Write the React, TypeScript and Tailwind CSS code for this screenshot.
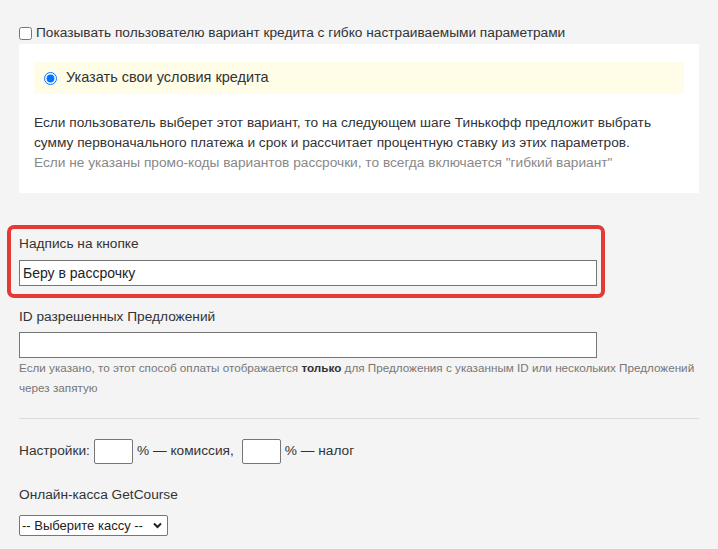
import React from 'react';

const App = () => {
  return (
    <div className="min-h-[549px] bg-[#f4f4f4] text-[#333] font-['Liberation_Sans',Arial,sans-serif] text-[13.7px]">
      <div className="pt-[24px] px-[19px]">
        {/* Flexible credit option */}
        <label className="flex items-center h-[18px] gap-[4px]">
          <input type="checkbox" className="w-[13px] h-[13px] m-0" />
          <span className="leading-[18px]">Показывать пользователю вариант кредита с гибко настраиваемыми параметрами</span>
        </label>

        <div className="bg-white mt-[2px] pt-[18px] px-[15px] pb-[20px]">
          <div className="bg-[#fffde8] h-[32px] flex items-center pl-[10px] gap-[9px]">
            <input type="radio" defaultChecked className="w-[13px] h-[13px] m-0 accent-[#0075ff]" />
            <span className="text-[14.5px]">Указать свои условия кредита</span>
          </div>
          <p className="mt-[19px] leading-[20px]">
            Если пользователь выберет этот вариант, то на следующем шаге Тинькофф предложит выбрать
            <br />
            сумму первоначального платежа и срок и рассчитает процентную ставку из этих параметров.
            <br />
            <span className="text-[#888]">Если не указаны промо-коды вариантов рассрочки, то всегда включается "гибкий вариант"</span>
          </p>
        </div>

        {/* Button caption */}
        <div className="mt-[32px] -ml-[12px] border-[4px] border-[#e53935] rounded-[7px] px-[8px] pt-[5px] pb-[8px] w-[598px]">
          <div className="leading-[20px]">Надпись на кнопке</div>
          <input
            type="text"
            defaultValue="Беру в рассрочку"
            className="block mt-[6px] w-[578px] h-[26px] border border-[#767676] bg-white px-[3px] text-[14px] text-[#222] outline-none"
          />
        </div>

        {/* Allowed offers */}
        <div className="mt-[9px] leading-[20px]">ID разрешенных Предложений</div>
        <input type="text" className="mt-[5px] w-[578px] h-[26px] border border-[#767676] bg-white outline-none block" />
        <p className="text-[11.7px] leading-[20px] text-[#777] whitespace-nowrap">
          Если указано, то этот способ оплаты отображается <b className="text-[#333]">только</b> для Предложения с указанным ID или нескольких Предложений
          <br />
          через запятую
        </p>

        <div className="mt-[20px] h-[1px] bg-[#dcdcdc]" />

        {/* Settings */}
        <div className="mt-[20px] flex items-center h-[25px]">
          <span>Настройки:</span>
          <input type="text" className="ml-[4px] w-[39px] h-[25px] border border-[#767676] bg-white rounded-[2px] outline-none" />
          <span className="ml-[4px]">% — комиссия,</span>
          <input type="text" className="ml-[8px] w-[39px] h-[25px] border border-[#767676] bg-white rounded-[2px] outline-none" />
          <span className="ml-[4px]">% — налог</span>
        </div>

        <div className="mt-[21px] leading-[20px]">Онлайн-касса GetCourse</div>
        <div className="relative mt-[10px] w-[149px] h-[21px]">
          <select className="appearance-none w-full h-full border border-[#767676] rounded-[2px] bg-white text-[13px] text-[#222] pl-[2px] outline-none">
            <option>-- Выберите кассу --</option>
          </select>
          <svg className="absolute right-[6px] top-[7px] pointer-events-none" width="9" height="7" viewBox="0 0 9 7">
            <path d="M1 1.5 L4.5 5 L8 1.5" fill="none" stroke="#222" strokeWidth="2" />
          </svg>
        </div>
      </div>
    </div>
  );
};

export default App;
